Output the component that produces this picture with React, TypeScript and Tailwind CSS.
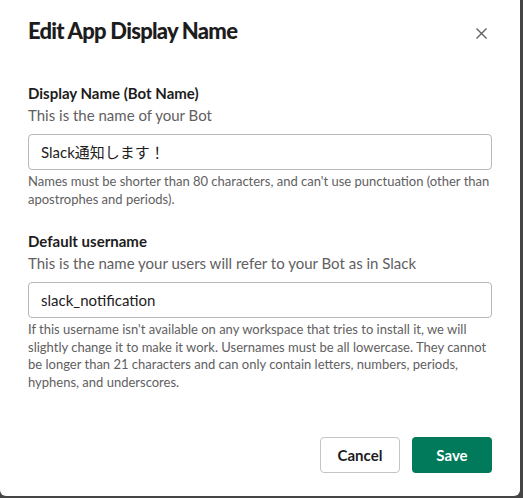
import React from "react";

const font = { fontFamily: 'Lato, "Noto Sans CJK JP", sans-serif' };

export default function App() {
  return (
    <div className="w-[523px] h-[498px] bg-[#454545] flex items-start" style={font}>
      <div className="w-[520px] h-[496px] bg-white rounded-b-[6px] flex flex-col text-[#1d1c1d]">
        <div className="flex items-start justify-between pl-[28px] pr-[33px] pt-[17px]">
          <h1 className="text-[22px] leading-[28px] font-black tracking-[-0.75px]">Edit App Display Name</h1>
          <svg width="11" height="11" viewBox="0 0 11 11" className="mt-[11px]">
            <path d="M0.5 0.5 L10.5 10.5 M10.5 0.5 L0.5 10.5" stroke="#616061" strokeWidth="1.4" fill="none" />
          </svg>
        </div>
        <div className="px-[28px] pt-[37px] flex flex-col">
          <label className="text-[15px] leading-[22px] font-bold">Display Name (Bot Name)</label>
          <div className="text-[15px] leading-[22px] text-[#616061]">This is the name of your Bot</div>
          <div className="mt-[8px] h-[36px] border border-[#b8b8b8] rounded-[4px] flex items-center pl-[12px] text-[15px]">
            Slack通知します！
          </div>
          <p className="mt-[3px] text-[13px] leading-[17.6px] text-[#616061]">
            Names must be shorter than 80 characters, and can't use punctuation (other than apostrophes and periods).
          </p>
          <label className="mt-[22px] text-[15px] leading-[22px] font-bold">Default username</label>
          <div className="text-[15px] leading-[22px] text-[#616061]">This is the name your users will refer to your Bot as in Slack</div>
          <div className="mt-[8px] h-[36px] border border-[#b8b8b8] rounded-[4px] flex items-center pl-[12px] text-[15px]">
            slack_notification
          </div>
          <p className="mt-[3px] text-[13px] leading-[17.6px] text-[#616061]">
            If this username isn't available on any workspace that tries to install it, we will slightly change it to make it work. Usernames must be all lowercase. They cannot be longer than 21 characters and can only contain letters, numbers, periods, hyphens, and underscores.
          </p>
        </div>
        <div className="mt-auto flex justify-end gap-[12px] pr-[28px] pb-[23px]">
          <button className="w-[80px] h-[36px] border border-[#c4c4c4] rounded-[4px] text-[15px] font-bold bg-white text-[#1d1c1d]">
            Cancel
          </button>
          <button className="w-[80px] h-[36px] rounded-[4px] text-[15px] font-bold bg-[#007a5a] text-white">
            Save
          </button>
        </div>
      </div>
    </div>
  );
}
